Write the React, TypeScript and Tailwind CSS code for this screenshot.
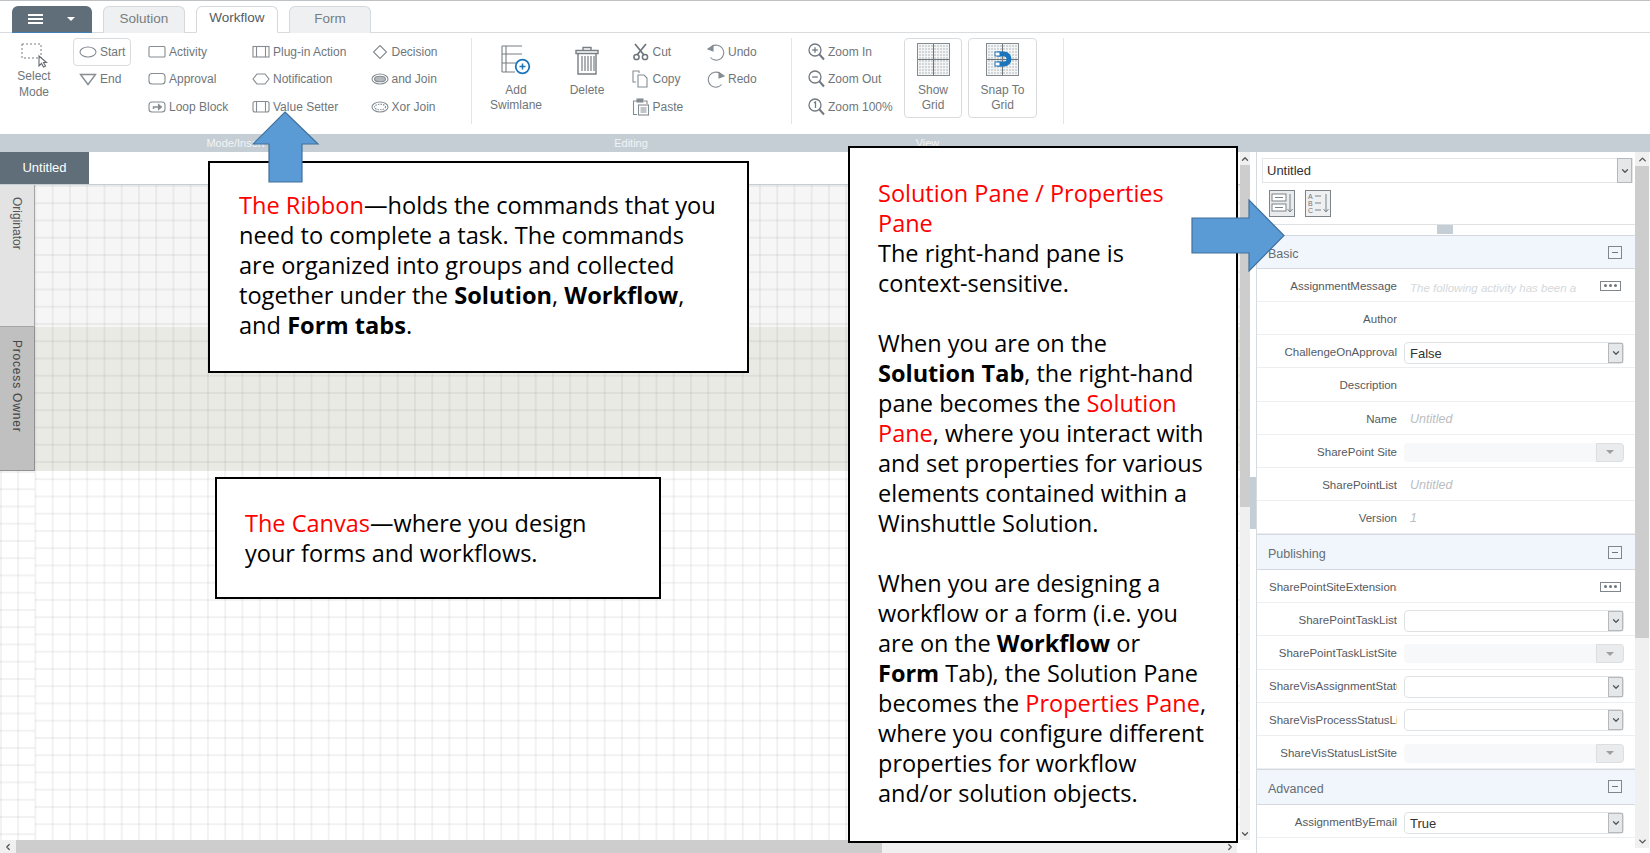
import React from "react";
import { ChevronUp, ChevronDown, ChevronLeft, ChevronRight } from "lucide-react";

const G = "#858c92";

const I = ({ w = 18, h = 14, children }: { w?: number; h?: number; children: React.ReactNode }) => (
  <svg width={w} height={h} viewBox={`0 0 ${w} ${h}`} fill="none" stroke={G} strokeWidth="1.1" className="shrink-0">
    {children}
  </svg>
);

const icons: Record<string, React.ReactNode> = {
  start: <I><ellipse cx="9" cy="7" rx="8" ry="5" /></I>,
  end: <I><path d="M1.5 2.5h15L9 12.5z" strokeWidth="1.4" /></I>,
  activity: <I><rect x="1" y="1.5" width="16" height="10.5" rx="1" /></I>,
  approval: <I><rect x="1" y="1.5" width="16" height="10.5" rx="3" /></I>,
  loop: <I><rect x="1" y="2" width="16" height="10" rx="3" /><path d="M5.5 9V7h6" strokeWidth="1.4" /><path d="M10.5 4.5 13.5 7l-3 2.5z" fill={G} /></I>,
  plugin: <I><rect x="1" y="1.5" width="16" height="10.5" /><path d="M4.5 1.5v10.5M13.5 1.5v10.5" /></I>,
  notify: <I><path d="M1 7 5 2h8l4 5-4 5H5z" /></I>,
  setter: <I><rect x="1" y="1.5" width="16" height="10.5" rx="2" /><path d="M4.5 1.5v10.5M13.5 1.5v10.5" /></I>,
  decision: <I><path d="M9 .5 15.5 7 9 13.5 2.5 7z" /></I>,
  and: <I><ellipse cx="9" cy="7" rx="8" ry="5" /><ellipse cx="9" cy="7" rx="5.5" ry="2.8" fill="#b4b9bd" /></I>,
  xor: <I><ellipse cx="9" cy="7" rx="8" ry="5" /><ellipse cx="9" cy="7" rx="5.5" ry="2.8" strokeDasharray="1.5 1" /></I>,
  cut: <I w={18} h={18}><path d="M3 1l9 11M14 1 5 12" strokeWidth="1.7" stroke="#6d747a" /><circle cx="4.5" cy="14" r="2.6" strokeWidth="1.5" stroke="#6d747a" /><circle cx="13" cy="14" r="2.6" strokeWidth="1.5" stroke="#6d747a" /></I>,
  copy: <I w={18} h={18}><path d="M7 3V1H1v11h3" /><path d="M6 5h6l3 3v9H6z" /></I>,
  paste: <I w={18} h={18}><path d="M5 3H1.5v13.5H5" /><path d="M12 3h3v3" /><rect x="5" y="1" width="6" height="3" fill={G} /><rect x="6.5" y="7" width="10" height="10" /><path d="M8.5 10h6M8.5 12h6M8.5 14h6" /></I>,
  undo: <I w={18} h={18}><path d="M5 3.5a7.5 7.5 0 1 1-1.5 11" /><path d="M1 6l5-3.5V8z" fill={G} /></I>,
  redo: <I w={18} h={18}><path d="M13 3.5a7.5 7.5 0 1 0 1.5 11" /><path d="M17 6l-5-3.5V8z" fill={G} /></I>,
};

const Zoom = ({ sign }: { sign: "+" | "-" | "1" }) => (
  <svg width="17" height="18" viewBox="0 0 17 18" fill="none" stroke="#71787e" strokeWidth="1.3" className="shrink-0">
    <circle cx="7" cy="7" r="6" />
    <path d="M11.5 11.5 16 16.5" strokeWidth="2" />
    {sign === "1" ? <path d="M6 5l1.5-1v6" /> : <path d="M4.2 7h5.6" />}
    {sign === "+" && <path d="M7 4.2v5.6" />}
  </svg>
);

const Tool = ({ icon, label, boxed }: { icon: React.ReactNode; label: string; boxed?: boolean }) => (
  <div
    className={`flex h-[27.5px] items-center gap-[3px] whitespace-nowrap text-[12px] text-[#6f767b] ${
      boxed ? "w-[58px] rounded-[4px] border border-[#d8dcdf] pl-[5px]" : "pl-[6px]"
    }`}
  >
    {icon}
    <span>{label}</span>
  </div>
);

const Big = ({ icon, lines, className }: { icon: React.ReactNode; lines: string[]; className: string }) => (
  <div className={`flex flex-col items-center text-[12px] leading-[15px] text-[#6f767b] ${className}`}>
    {icon}
    {lines.map((l) => (
      <div key={l}>{l}</div>
    ))}
  </div>
);

const Tab = ({ label, active }: { label: string; active?: boolean }) => (
  <div
    className={`flex h-[27px] w-[82px] items-center justify-center rounded-t-[6px] border border-[#d5d9dc] pb-[2px] text-[13.5px] ${
      active ? "border-b-white bg-white text-[#555b60]" : "border-b-0 bg-[#eef0f1] text-[#777d82]"
    }`}
  >
    {label}
  </div>
);

const GridIcon = ({ magnet }: { magnet?: boolean }) => (
  <div className="relative h-[33px] w-[33px] border border-[#82898f] bg-[#d3d6d8] bg-[linear-gradient(#f4f5f5_1px,transparent_1px),linear-gradient(90deg,#f4f5f5_1px,transparent_1px)] bg-[size:3px_3px]">
    <div className="absolute top-0 bottom-0 left-[15px] w-px bg-[#6f767b]" />
    <div className="absolute right-0 left-0 top-[15px] h-px bg-[#6f767b]" />
    {magnet && (
      <svg width="20" height="20" viewBox="0 0 20 20" className="absolute top-[5px] left-[7px]">
        <path d="M3 5h7a5 5 0 0 1 0 10H3" fill="none" stroke="#1b75bc" strokeWidth="5" />
        <rect x="1" y="3" width="5" height="4" fill="#fff" stroke="#1b75bc" />
        <rect x="1" y="13" width="5" height="4" fill="#fff" stroke="#1b75bc" />
      </svg>
    )}
  </div>
);

const Select = ({ value, disabled }: { value?: string; disabled?: boolean }) =>
  disabled ? (
    <div className="flex h-[19px] w-[220px] items-stretch justify-end rounded-[4px] bg-[#f7f8fa]">
      <div className="flex w-[28px] items-center justify-center rounded-r-[4px] border border-[#dcdfe1] bg-[#eaebec]">
        <div className="h-0 w-0 border-x-[4px] border-t-[4px] border-x-transparent border-t-[#9aa0a5]" />
      </div>
    </div>
  ) : (
    <div className="flex h-[22px] w-[220px] items-center justify-between rounded-[4px] border border-[#dfe2e4] pl-[5px] text-[13px] text-[#333]">
      <span className="pt-[2px]">{value}</span>
      <div className="flex h-[20px] w-[15px] items-center justify-center border border-[#b5b9bc] bg-[#e6e7e8]">
        <ChevronDown size={10} strokeWidth={3} className="text-[#555]" />
      </div>
    </div>
  );

const Row = ({ label, children }: { label: string; children?: React.ReactNode }) => (
  <div className="flex h-[33.15px] items-center border-b border-[#eceeef] pt-[3px]">
    <div className="ml-[12px] w-[128px] shrink-0 overflow-hidden text-right text-[11.5px] whitespace-nowrap text-[#555a5f]">
      {label}
    </div>
    <div className="ml-[7px] flex min-w-0 flex-1 items-center">{children}</div>
  </div>
);

const Hint = ({ children }: { children: React.ReactNode }) => (
  <span className="pl-[6px] text-[12.5px] text-[#b9bec2] italic">{children}</span>
);

const Dots = () => (
  <div className="-mt-[2px] flex h-[10px] w-[21px] items-center justify-center gap-[2px] border border-[#7f868c]">
    <i className="h-[3px] w-[3px] rounded-full bg-[#6f767b]" />
    <i className="h-[3px] w-[3px] rounded-full bg-[#6f767b]" />
    <i className="h-[3px] w-[3px] rounded-full bg-[#6f767b]" />
  </div>
);

const Section = ({ label, h }: { label: string; h: string }) => (
  <div className={`flex items-center justify-between border-y border-[#d3d9de] bg-[#f0f6fc] pr-[13px] pl-[11px] text-[12.5px] text-[#666c71] ${h}`}>
    <span className="pt-[5px]">{label}</span>
    <div className="flex h-[13px] w-[14px] items-center justify-center border border-[#7f868c]">
      <div className="h-px w-[6px] bg-[#6f767b]" />
    </div>
  </div>
);

const R = ({ children }: { children: React.ReactNode }) => <span className="text-[#ff0000]">{children}</span>;

export default function App() {
  return (
    <div className="relative flex h-[853px] w-[1650px] flex-col overflow-hidden bg-white font-['Liberation_Sans',sans-serif]">
      {/* Tab strip */}
      <div className="flex h-[33px] shrink-0 items-end gap-[11px] border-t border-b border-t-[#bfc2c4] border-b-[#d9dcde] pl-[12px]">
        <div className="mb-[-1px] flex h-[27px] w-[80px] items-center justify-between rounded-t-[6px] border-b border-[#3f7fb5] bg-[#5f6e78] pr-[17px] pl-[16px]">
          <div className="flex w-[15px] flex-col gap-[2px]">
            <div className="h-[2px] bg-white" />
            <div className="h-[2px] bg-white" />
            <div className="h-[2px] bg-white" />
          </div>
          <div className="h-0 w-0 border-x-[4px] border-t-[4px] border-x-transparent border-t-white" />
        </div>
        <div className="mb-[-1px] flex gap-[11px]">
          <Tab label="Solution" />
          <Tab label="Workflow" active />
          <Tab label="Form" />
        </div>
      </div>

      {/* Ribbon */}
      <div className="flex h-[101px] shrink-0 pt-[5px]">
        <div className="flex h-[86px] w-[471px]">
          <div className="flex w-[73px] flex-col items-center pt-[5px] pr-[5px] text-[12px] leading-[15px] text-[#6f767b]">
            <svg width="27" height="25" viewBox="0 0 27 25" fill="none" className="mb-[1px]">
              <rect x="1" y="1" width="19" height="14" stroke="#777e84" strokeDasharray="2 2" />
              <path d="M18 13v10l2.5-2.5 2 3.5 2-1-2-3.5h3z" fill="#fff" stroke="#666c71" strokeWidth="1.1" />
            </svg>
            <div>Select</div>
            <div className="pt-px">Mode</div>
          </div>
          <div className="w-[69px]">
            <Tool icon={icons.start} label="Start" boxed />
            <Tool icon={icons.end} label="End" />
          </div>
          <div className="w-[104px]">
            <Tool icon={icons.activity} label="Activity" />
            <Tool icon={icons.approval} label="Approval" />
            <Tool icon={icons.loop} label="Loop Block" />
          </div>
          <div className="w-[118.5px]">
            <Tool icon={icons.plugin} label="Plug-in Action" />
            <Tool icon={icons.notify} label="Notification" />
            <Tool icon={icons.setter} label="Value Setter" />
          </div>
          <div>
            <Tool icon={icons.decision} label="Decision" />
            <Tool icon={icons.and} label="and Join" />
            <Tool icon={icons.xor} label="Xor Join" />
          </div>
        </div>

        <div className="flex h-[86px] w-[320px] border-l border-[#e2e4e6]">
          <Big
            className="w-[88px] pt-[7px]"
            lines={["Add", "Swimlane"]}
            icon={
              <svg width="30" height="30" viewBox="0 0 30 30" fill="none" stroke="#777e84" strokeWidth="1.1" className="mb-[8px]">
                <path d="M1 1v26M5 1v26M1 1h20M1 9h20M1 18h14M1 27h13" />
                <circle cx="21.5" cy="21.5" r="6.8" fill="#fff" stroke="#1b75bc" strokeWidth="1.8" />
                <path d="M18.5 21.5h6M21.5 18.5v6" stroke="#1b75bc" strokeWidth="1.5" />
              </svg>
            }
          />
          <Big
            className="w-[54px] pt-[8px]"
            lines={["Delete"]}
            icon={
              <svg width="24" height="29" viewBox="0 0 24 29" fill="none" stroke="#777e84" strokeWidth="1.4" className="mb-[8px]">
                <path d="M8 4V1.5h8V4M1 4.5h22v3H1zM3 8v20h18V8" />
                <path d="M7 10v15M10 10v15M13 10v15M16 10v15M19 10v15" strokeWidth="1.2" />
              </svg>
            }
          />
          <div className="w-[93px] pl-[11.5px]">
            <Tool icon={icons.cut} label="Cut" />
            <Tool icon={icons.copy} label="Copy" />
            <Tool icon={icons.paste} label="Paste" />
          </div>
          <div className="-ml-[6px]">
            <Tool icon={icons.undo} label="Undo" />
            <Tool icon={icons.redo} label="Redo" />
          </div>
        </div>

        <div className="flex h-[86px] w-[273px] gap-[6px] border-r border-l border-[#e2e4e6]">
          <div className="w-[106px] pl-[10px]">
            <Tool icon={<Zoom sign="+" />} label="Zoom In" />
            <Tool icon={<Zoom sign="-" />} label="Zoom Out" />
            <Tool icon={<Zoom sign="1" />} label="Zoom 100%" />
          </div>
          <Big
            className="h-[80px] w-[58px] gap-0 rounded-[4px] border border-[#d8dcdf] pt-[4px]"
            lines={["Show", "Grid"]}
            icon={<div className="mb-[7px]"><GridIcon /></div>}
          />
          <Big
            className="h-[80px] w-[69px] rounded-[4px] border border-[#d8dcdf] pt-[4px]"
            lines={["Snap To", "Grid"]}
            icon={<div className="mb-[7px]"><GridIcon magnet /></div>}
          />
        </div>
      </div>

      {/* Ribbon group captions */}
      <div className="flex h-[18px] shrink-0 bg-[#c5ced5] text-center text-[11px] leading-[18px] text-[#f2f4f6]">
        <div className="w-[471px]">Mode/Insert</div>
        <div className="w-[320px]">Editing</div>
        <div className="w-[273px]">View</div>
      </div>

      {/* Work area */}
      <div className="flex min-h-0 flex-1">
        <div className="flex w-[1240px] shrink-0 flex-col">
          <div className="h-[33px] shrink-0 border-b border-[#c5ced5]">
            <div className="flex h-[32px] w-[89px] items-center justify-center bg-[#5f6e78] text-[13px] text-white">Untitled</div>
          </div>
          <div className="relative flex min-h-0 flex-1 flex-col">
            <div className="flex h-[142px] shrink-0">
              <div className="flex w-[35px] items-center justify-start border-r border-b border-[#a3a5a7] bg-[#e3e3e3] pt-[12px] text-[12px] text-[#555] [writing-mode:vertical-rl]">
                <span>Originator</span>
              </div>
              <div className="flex-1 bg-[#f6f6f6]" />
            </div>
            <div className="flex h-[144px] shrink-0">
              <div className="flex w-[35px] items-center justify-start border-r border-b border-[#8f9193] bg-[#c0c0c0] pt-[13px] text-[12px] tracking-[0.8px] text-[#444] [writing-mode:vertical-rl]">
                <span>Process Owner</span>
              </div>
              <div className="flex-1 bg-[#e9eae4]" />
            </div>
            <div className="flex-1" />
            <div className="pointer-events-none absolute inset-0 left-[35px] bg-[linear-gradient(rgba(0,0,0,0.05)_1.5px,transparent_1.5px),linear-gradient(90deg,rgba(0,0,0,0.05)_1.5px,transparent_1.5px)] bg-[size:17.25px_17.25px] bg-[position:-0.5px_0]" />
            <div className="pointer-events-none absolute top-[286px] right-[1205px] bottom-0 left-0 bg-[linear-gradient(rgba(0,0,0,0.05)_1.5px,transparent_1.5px),linear-gradient(90deg,rgba(0,0,0,0.05)_1.5px,transparent_1.5px)] bg-[size:17.25px_17.25px]" />
          </div>
          <div className="flex h-[13px] shrink-0 items-center bg-[#f0f0f0] text-[#555]">
            <div className="flex w-[16px] justify-center"><ChevronLeft size={10} strokeWidth={3} /></div>
            <div className="h-full w-[866px] bg-[#cdcdcd]" />
            <div className="flex flex-1 justify-end pr-[2px]"><ChevronRight size={10} strokeWidth={3} /></div>
            <div className="w-[3px] self-stretch bg-white" />
          </div>
        </div>

        <div className="flex h-[688px] w-[10px] shrink-0 flex-col bg-[#f0f0f0] text-[#555]">
          <div className="flex h-[13px] items-center justify-center"><ChevronUp size={10} strokeWidth={3} /></div>
          <div className="h-[342px] bg-[#cdcdcd]" />
          <div className="flex-1" />
          <div className="flex h-[13px] items-center justify-center"><ChevronDown size={10} strokeWidth={3} /></div>
        </div>

        <div className="flex w-[7px] shrink-0 flex-col border-r border-[#d5dade] pt-[325px]">
          <div className="h-[52px] bg-[#c5ced5]" />
        </div>

        <div className="flex w-[378px] shrink-0 flex-col">
          <div className="flex h-[31px] shrink-0 items-end pl-[5px]">
            <div className="flex h-[25px] w-[371px] items-center justify-between border border-[#e3e5e7] pl-[4px] text-[13px] text-[#333]">
              <span>Untitled</span>
              <div className="flex h-[25px] w-[15px] items-center justify-center border border-[#b5b9bc] bg-[#e6e7e8]">
                <ChevronDown size={10} strokeWidth={3} className="text-[#555]" />
              </div>
            </div>
          </div>
          <div className="flex h-[42px] shrink-0 items-center gap-[10px] border-b border-[#dfe2e4] pl-[12px]">
            <svg width="26" height="27" viewBox="0 0 26 27" fill="#e9ebec" stroke="#7c8389" strokeWidth="1">
              <rect x=".5" y=".5" width="25" height="26" />
              <rect x="3" y="4" width="14" height="7" fill="#fff" />
              <rect x="3" y="14" width="14" height="7" fill="#fff" />
              <path d="M6 7.5h8M6 17.5h8M21 4v17M18.5 19l2.5 3 2.5-3" fill="none" />
            </svg>
            <svg width="26" height="27" viewBox="0 0 26 27" fill="#eef0f1" stroke="#7c8389" strokeWidth="1">
              <rect x=".5" y=".5" width="25" height="26" />
              <path d="M10 6h6M10 13h6M10 20h6M21 4v17M18.5 19l2.5 3 2.5-3" fill="none" />
              <g fill="#6f767b" stroke="none" fontSize="7" fontFamily="Liberation Sans, sans-serif">
                <text x="3" y="9">A</text>
                <text x="3" y="16">B</text>
                <text x="3" y="23">C</text>
              </g>
            </svg>
          </div>
          <div className="flex h-[10px] shrink-0 justify-center pr-[3px]">
            <div className="h-[9px] w-[16px] bg-[#c5ced5]" />
          </div>

          <Section label="Basic" h="h-[34px] shrink-0" />
          <Row label="AssignmentMessage">
            <div className="flex flex-1 items-center justify-between pr-[14px]">
              <span className="w-[176px] overflow-hidden whitespace-nowrap">
                <span className="pl-[6px] text-[11.5px] text-[#d5d8da] italic">The following activity has been a</span>
              </span>
              <Dots />
            </div>
          </Row>
          <Row label="Author" />
          <Row label="ChallengeOnApproval"><Select value="False" /></Row>
          <Row label="Description" />
          <Row label="Name"><Hint>Untitled</Hint></Row>
          <Row label="SharePoint Site"><Select disabled /></Row>
          <Row label="SharePointList"><Hint>Untitled</Hint></Row>
          <Row label="Version"><Hint>1</Hint></Row>

          <Section label="Publishing" h="h-[36px] shrink-0" />
          <Row label="SharePointSiteExtensions">
            <div className="flex flex-1 justify-end pr-[14px]"><Dots /></div>
          </Row>
          <Row label="SharePointTaskList"><Select /></Row>
          <Row label="SharePointTaskListSite"><Select disabled /></Row>
          <Row label="ShareVisAssignmentStatus"><Select /></Row>
          <Row label="ShareVisProcessStatusList"><Select /></Row>
          <Row label="ShareVisStatusListSite"><Select disabled /></Row>

          <Section label="Advanced" h="h-[36px] shrink-0" />
          <Row label="AssignmentByEmail"><Select value="True" /></Row>
        </div>

        <div className="flex h-[696px] w-[14px] shrink-0 flex-col bg-[#f0f0f0] text-[#555]">
          <div className="flex h-[14px] items-center justify-center"><ChevronUp size={11} strokeWidth={3} /></div>
          <div className="h-[472px] bg-[#cdcdcd]" />
          <div className="flex-1" />
          <div className="flex h-[14px] items-center justify-center"><ChevronDown size={11} strokeWidth={3} /></div>
        </div>
      </div>

      {/* Callouts laid over the application */}
      <div className="absolute top-[161px] left-[208px] h-[212px] w-[541px] border-2 border-black bg-white pt-[27px] pl-[29px] font-['Open_Sans',sans-serif] text-[23.6px] leading-[30px] whitespace-nowrap text-black">
        <R>The Ribbon</R>—holds the commands that you<br />
        need to complete a task. The commands<br />
        are organized into groups and collected<br />
        together under the <b>Solution</b>, <b>Workflow</b>,<br />
        and <b>Form tabs</b>.
      </div>

      <div className="absolute top-[477px] left-[215px] h-[122px] w-[446px] border-2 border-black bg-white pt-[29px] pl-[28px] font-['Open_Sans',sans-serif] text-[23.5px] leading-[30px] whitespace-nowrap text-black">
        <R>The Canvas</R>—where you design<br />
        your forms and workflows.
      </div>

      <div className="absolute top-[146px] left-[848px] h-[697px] w-[390px] border-2 border-black bg-white pt-[30px] pl-[28px] font-['Open_Sans',sans-serif] text-[23.5px] leading-[30px] whitespace-nowrap text-black">
        <R>Solution Pane / Properties</R><br />
        <R>Pane</R><br />
        The right-hand pane is<br />
        context-sensitive.<br />
        <br />
        When you are on the<br />
        <b>Solution Tab</b>, the right-hand<br />
        pane becomes the <R>Solution</R><br />
        <R>Pane</R>, where you interact with<br />
        and set properties for various<br />
        elements contained within a<br />
        Winshuttle Solution.<br />
        <br />
        When you are designing a<br />
        workflow or a form (i.e. you<br />
        are on the <b>Workflow</b> or<br />
        <b>Form</b> Tab), the Solution Pane<br />
        becomes the <R>Properties Pane</R>,<br />
        where you configure different<br />
        properties for workflow<br />
        and/or solution objects.
      </div>

      <svg width="68" height="72" viewBox="0 0 68 72" className="absolute top-[111px] left-[252px]">
        <path d="M33 1 66 33H50v38H17V33H1z" fill="#5b9bd5" stroke="#41719c" strokeWidth="1.2" />
      </svg>
      <svg width="94" height="73" viewBox="0 0 94 73" className="absolute top-[199px] left-[1191px]">
        <path d="M1 19h57V1l35 35.5L58 72V54H1z" fill="#5b9bd5" stroke="#41719c" strokeWidth="1.2" />
      </svg>
    </div>
  );
}
